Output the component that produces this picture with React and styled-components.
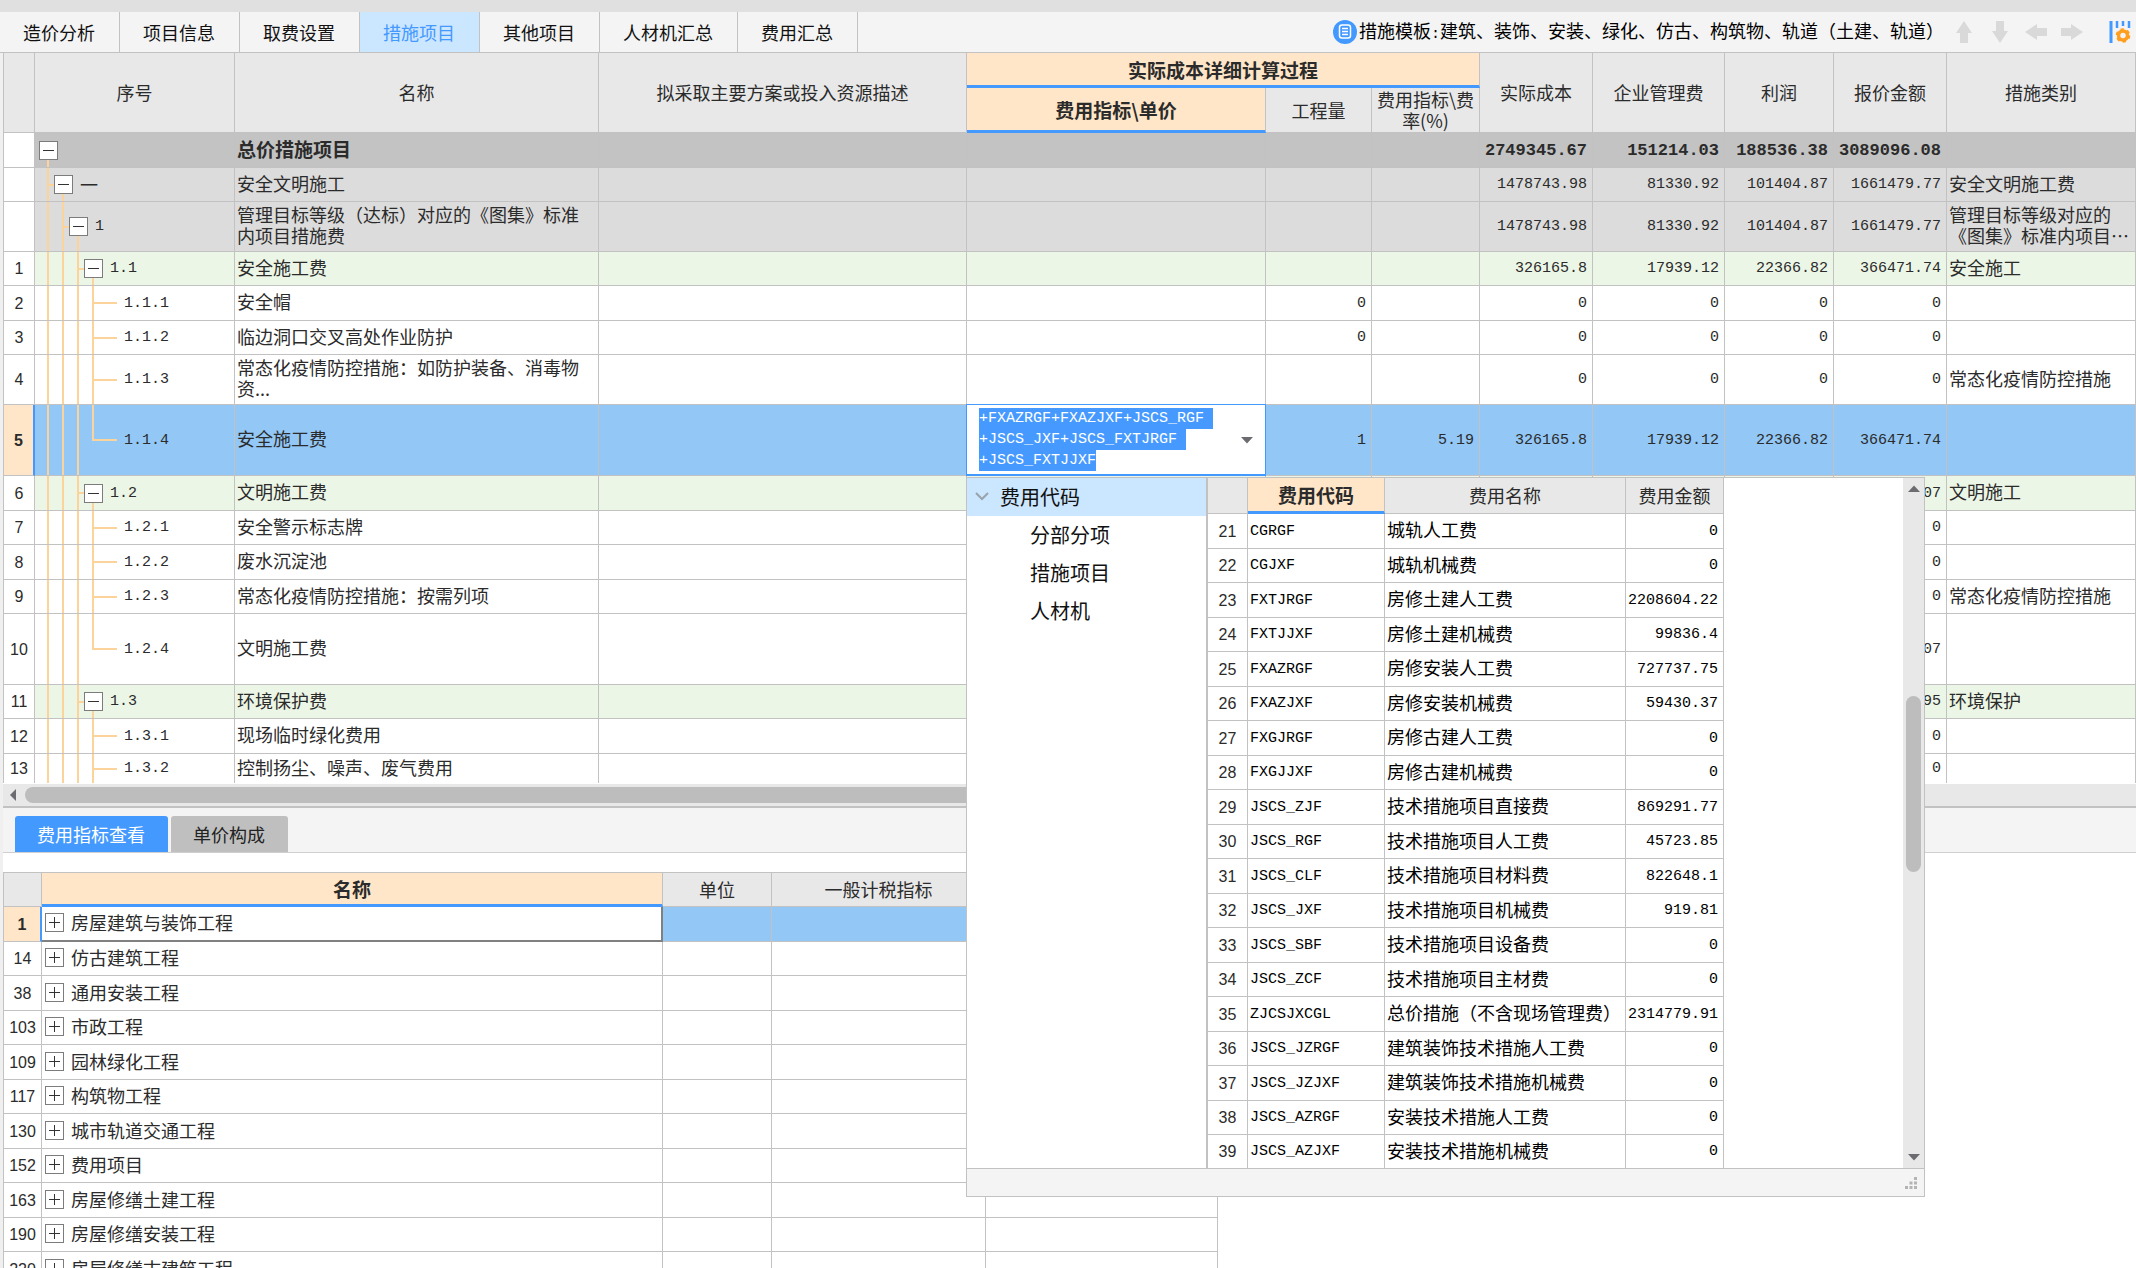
import { useEffect, useRef } from "react";
import styled, { createGlobalStyle, css, ThemeProvider } from "styled-components";

const theme = {
  colors: {
    text: "#2b2b2b",
    line: "#c2c2c2",
    head: "#e8e8e8",
    bar: "#f4f4f4",
    blue: "#4499ff",
    select: "#92c7f6",
    pale: "#cbe6ff",
    orange: "#ffe6c8",
    guide: "#fdd39c",
    total: "#c3c3c3",
    group: "#dcdcdc",
    green: "#ecf6e6",
  },
  fonts: {
    cjk: '"Noto Sans CJK SC", sans-serif',
    mono: '"Liberation Mono", "Noto Sans CJK SC", monospace',
    sans: '"Liberation Sans", sans-serif',
  },
};

const tabs = [
  "造价分析",
  "项目信息",
  "取费设置",
  "措施项目",
  "其他项目",
  "人材机汇总",
  "费用汇总",
];

const zeros = ["0", "0", "0", "0"];

// vals: 工程量, 费率, 实际成本, 企业管理费, 利润, 报价金额
const items = [
  { no: "", level: 0, code: "", name: "总价措施项目", tone: "total", vals: ["", "", "2749345.67", "151214.03", "188536.38", "3089096.08"], kind: "" },
  { no: "", level: 1, code: "一", name: "安全文明施工", tone: "group", vals: ["", "", "1478743.98", "81330.92", "101404.87", "1661479.77"], kind: "安全文明施工费" },
  { no: "", level: 2, code: "1", name: "管理目标等级（达标）对应的《图集》标准\n内项目措施费", tone: "group", size: 50, vals: ["", "", "1478743.98", "81330.92", "101404.87", "1661479.77"], kind: "管理目标等级对应的\n《图集》标准内项目…" },
  { no: 1, level: 3, code: "1.1", name: "安全施工费", tone: "green", vals: ["", "", "326165.8", "17939.12", "22366.82", "366471.74"], kind: "安全施工" },
  { no: 2, leaf: true, code: "1.1.1", name: "安全帽", vals: ["0", "", ...zeros], kind: "" },
  { no: 3, leaf: true, code: "1.1.2", name: "临边洞口交叉高处作业防护", vals: ["0", "", ...zeros], kind: "" },
  { no: 4, leaf: true, code: "1.1.3", name: "常态化疫情防控措施：如防护装备、消毒物\n资...", size: 50, vals: ["", "", ...zeros], kind: "常态化疫情防控措施" },
  { no: 5, leaf: true, last: true, editing: true, code: "1.1.4", name: "安全施工费", tone: "select", size: 71, vals: ["1", "5.19", "326165.8", "17939.12", "22366.82", "366471.74"], kind: "" },
  { no: 6, level: 3, code: "1.2", name: "文明施工费", tone: "green", vals: ["", "", "", "", "", "07"], kind: "文明施工" },
  { no: 7, leaf: true, code: "1.2.1", name: "安全警示标志牌", vals: ["", "", "", "", "", "0"], kind: "" },
  { no: 8, leaf: true, code: "1.2.2", name: "废水沉淀池", vals: ["", "", "", "", "", "0"], kind: "" },
  { no: 9, leaf: true, code: "1.2.3", name: "常态化疫情防控措施：按需列项", vals: ["", "", "", "", "", "0"], kind: "常态化疫情防控措施" },
  { no: 10, leaf: true, last: true, code: "1.2.4", name: "文明施工费", size: 71, vals: ["", "", "", "", "", "07"], kind: "" },
  { no: 11, level: 3, code: "1.3", name: "环境保护费", tone: "green", vals: ["", "", "", "", "", "95"], kind: "环境保护" },
  { no: 12, leaf: true, code: "1.3.1", name: "现场临时绿化费用", vals: ["", "", "", "", "", "0"], kind: "" },
  { no: 13, leaf: true, code: "1.3.2", name: "控制扬尘、噪声、废气费用", size: 29, vals: ["", "", "", "", "", "0"], kind: "" },
];

const feeCodes = [
  ["CGRGF", "城轨人工费", "0"],
  ["CGJXF", "城轨机械费", "0"],
  ["FXTJRGF", "房修土建人工费", "2208604.22"],
  ["FXTJJXF", "房修土建机械费", "99836.4"],
  ["FXAZRGF", "房修安装人工费", "727737.75"],
  ["FXAZJXF", "房修安装机械费", "59430.37"],
  ["FXGJRGF", "房修古建人工费", "0"],
  ["FXGJJXF", "房修古建机械费", "0"],
  ["JSCS_ZJF", "技术措施项目直接费", "869291.77"],
  ["JSCS_RGF", "技术措施项目人工费", "45723.85"],
  ["JSCS_CLF", "技术措施项目材料费", "822648.1"],
  ["JSCS_JXF", "技术措施项目机械费", "919.81"],
  ["JSCS_SBF", "技术措施项目设备费", "0"],
  ["JSCS_ZCF", "技术措施项目主材费", "0"],
  ["ZJCSJXCGL", "总价措施（不含现场管理费）", "2314779.91"],
  ["JSCS_JZRGF", "建筑装饰技术措施人工费", "0"],
  ["JSCS_JZJXF", "建筑装饰技术措施机械费", "0"],
  ["JSCS_AZRGF", "安装技术措施人工费", "0"],
  ["JSCS_AZJXF", "安装技术措施机械费", "0"],
];

const indexes = [
  [1, "房屋建筑与装饰工程"],
  [14, "仿古建筑工程"],
  [38, "通用安装工程"],
  [103, "市政工程"],
  [109, "园林绿化工程"],
  [117, "构筑物工程"],
  [130, "城市轨道交通工程"],
  [152, "费用项目"],
  [163, "房屋修缮土建工程"],
  [190, "房屋修缮安装工程"],
  [220, "房屋修缮古建筑工程"],
];

const formula =
  "+FXAZRGF+FXAZJXF+JSCS_RGF\n+JSCS_JXF+JSCS_FXTJRGF\n+JSCS_FXTJJXF";

function FormulaEditor() {
  const box = useRef(null);

  useEffect(() => {
    box.current.focus();
    box.current.select();
  }, []);

  return (
    <Editor>
      <textarea
        ref={box}
        aria-label="费用指标\单价"
        defaultValue={formula}
        spellCheck={false}
      />
      <button type="button" aria-label="费用代码">
        <Triangle />
      </button>
    </Editor>
  );
}

function Triangle({ turn = 0 }) {
  return (
    <svg width="12" height="8" viewBox="0 0 12 8">
      <path d="M0 1h12L6 7.500z" fill="#6b6b70" transform={`rotate(${turn} 6 4)`} />
    </svg>
  );
}

function CodePopup() {
  return (
    <Popup>
      <div className="popup-body">
        <CodeTree>
          <TreeButton type="button" $active>
            <svg width="16" height="16" viewBox="0 0 16 16">
              <path d="M2 5l6 6 6-6" fill="none" stroke="#9aa3ab" strokeWidth="2" />
            </svg>
            费用代码
          </TreeButton>
          <TreeButton type="button" $child>分部分项</TreeButton>
          <TreeButton type="button" $child>措施项目</TreeButton>
          <TreeButton type="button" $child>人材机</TreeButton>
        </CodeTree>
        <div className="popup-codes">
          <Grid $width={516}>
            <colgroup>
              <col style={{ width: 40 }} />
              <col style={{ width: 137 }} />
              <col style={{ width: 241 }} />
              <col style={{ width: 98 }} />
            </colgroup>
            <thead>
              <tr>
                <Head $height={36} />
                <Head $current>费用代码</Head>
                <Head>费用名称</Head>
                <Head>费用金额</Head>
              </tr>
            </thead>
            <tbody>
              {feeCodes.map(([code, name, amount], i) => (
                <Row key={code} $size={i === feeCodes.length - 1 ? 33 : 0}>
                  <RowNo>{i + 21}</RowNo>
                  <Code>{code}</Code>
                  <Text $dark>{name}</Text>
                  <Num $dark>{amount}</Num>
                </Row>
              ))}
            </tbody>
          </Grid>
        </div>
        <VScroll>
          <Triangle turn={180} />
          <div className="track">
            <div className="thumb" />
          </div>
          <Triangle />
        </VScroll>
      </div>
      <div className="popup-foot">
        <svg width="14" height="14" viewBox="0 0 14 14" fill="#b4b4b4">
          <path d="M10 1h3v3h-3zM5.500 5.500h3v3h-3zM10 5.500h3v3h-3zM1 10h3v3H1zM5.500 10h3v3h-3zM10 10h3v3h-3z" />
        </svg>
      </div>
    </Popup>
  );
}

function TreeCode({ item }) {
  const depth = item.leaf ? 4 : item.level;
  return (
    <Tree>
      {Array.from({ length: depth }, (_, i) => (
        <Guide
          key={i}
          $stub={i === depth - 1}
          $half={item.last && i === depth - 1}
          $long={item.leaf}
        />
      ))}
      {item.leaf ? (
        <span className="leaf-gap" />
      ) : (
        <BranchMark>
          <Toggle type="button" aria-label="收起">
            <svg width="11" height="11" viewBox="0 0 11 11">
              <path d="M0 5.500h11" stroke="#333" />
            </svg>
          </Toggle>
        </BranchMark>
      )}
      <span className={item.code === "一" ? "han" : ""}>{item.code}</span>
    </Tree>
  );
}

function Arrow({ turn, label }) {
  return (
    <IconButton type="button" aria-label={label}>
      <svg width="24" height="24" viewBox="0 0 24 24">
        <path d="M12 1l8 12h-4v10H8V13H4z" fill="#d9d9d9" transform={`rotate(${turn} 12 12)`} />
      </svg>
    </IconButton>
  );
}

function TopBar() {
  return (
    <Bar>
      <nav>
        {tabs.map((tab) => (
          <Tab key={tab} type="button" $active={tab === "措施项目"}>
            {tab}
          </Tab>
        ))}
      </nav>
      <div className="tools">
        <svg width="24" height="24" viewBox="0 0 24 24">
          <circle cx="12" cy="12" r="12" fill="#4499ff" />
          <rect x="6.500" y="5" width="11" height="13" rx="2.500" fill="none" stroke="#fff" strokeWidth="1.500" />
          <path d="M9 8.500h6M9 11.500h6M9 14.500h6" stroke="#fff" strokeWidth="1.500" />
        </svg>
        <span className="template">
          措施模板<span className="colon">:</span>
          建筑、装饰、安装、绿化、仿古、构筑物、轨道（土建、轨道）
        </span>
        <div className="arrows">
          <Arrow turn={0} label="上移" />
          <Arrow turn={180} label="下移" />
          <Arrow turn={270} label="左移" />
          <Arrow turn={90} label="右移" />
        </div>
        <IconButton type="button" aria-label="设置">
          <svg width="24" height="24" viewBox="0 0 24 24">
            <path d="M3 1v22" stroke="#4499ff" strokeWidth="3" />
            <path d="M9 1v7M15 1v5M21 1v7" stroke="#4499ff" strokeWidth="2.500" />
            <circle cx="15" cy="15.500" r="4.500" fill="none" stroke="#ff9e1f" strokeWidth="3.500" />
            <circle cx="15" cy="15.500" r="6.200" fill="none" stroke="#ff9e1f" strokeWidth="2.200" strokeDasharray="3.250 3.250" />
          </svg>
        </IconButton>
      </div>
    </Bar>
  );
}

function MeasureGrid() {
  return (
    <Grid>
      <colgroup>
        {[32, 200, 364, 368, 299, 106, 108, 113, 132, 109, 113].map((w, i) => (
          <col key={i} style={{ width: w }} />
        ))}
        <col />
      </colgroup>
      <thead>
        <tr>
          <Head rowSpan={2} $first />
          <Head rowSpan={2}>序号</Head>
          <Head rowSpan={2}>名称</Head>
          <Head rowSpan={2}>拟采取主要方案或投入资源描述</Head>
          <Head colSpan={3} $current $height={35}>实际成本详细计算过程</Head>
          <Head rowSpan={2}>实际成本</Head>
          <Head rowSpan={2}>企业管理费</Head>
          <Head rowSpan={2}>利润</Head>
          <Head rowSpan={2}>报价金额</Head>
          <Head rowSpan={2}>措施类别</Head>
        </tr>
        <tr>
          <Head $current $height={45}>费用指标\单价</Head>
          <Head>工程量</Head>
          <Head>{"费用指标\\费\n率(%)"}</Head>
        </tr>
      </thead>
      <tbody>
        {items.map((item) => (
          <Row key={item.code} $tone={item.tone} $size={item.size}>
            <RowNo $first $current={item.editing}>{item.no}</RowNo>
            <td>
              <TreeCode item={item} />
            </td>
            <Text $bold={item.tone === "total"}>{item.name}</Text>
            <td />
            {item.editing ? (
              <EditCell>
                <FormulaEditor />
                <CodePopup />
              </EditCell>
            ) : (
              <td />
            )}
            {item.vals.map((val, i) => (
              <Num key={i} $bold={item.tone === "total"}>{val}</Num>
            ))}
            <Text>{item.kind}</Text>
          </Row>
        ))}
      </tbody>
    </Grid>
  );
}

function IndexGrid() {
  return (
    <Grid $width={1215} $top>
      <colgroup>
        <col style={{ width: 39 }} />
        <col style={{ width: 621 }} />
        <col style={{ width: 109 }} />
        <col style={{ width: 214 }} />
        <col style={{ width: 232 }} />
      </colgroup>
      <thead>
        <tr>
          <Head $first $height={34} />
          <Head $current>名称</Head>
          <Head>单位</Head>
          <Head>一般计税指标</Head>
          <Head />
        </tr>
      </thead>
      <tbody>
        {indexes.map(([no, name], i) => (
          <Row key={no} $tone={i === 0 ? "select" : ""}>
            <RowNo $first $current={i === 0}>{no}</RowNo>
            <IndexName $current={i === 0}>
              <div>
                <Toggle type="button" aria-label="展开">
                  <svg width="11" height="11" viewBox="0 0 11 11">
                    <path d="M0 5.500h11M5.500 0v11" stroke="#333" />
                  </svg>
                </Toggle>
                {name}
              </div>
            </IndexName>
            <td />
            <td />
            <td />
          </Row>
        ))}
      </tbody>
    </Grid>
  );
}

function App() {
  return (
    <ThemeProvider theme={theme}>
      <GlobalStyle />
      <Page>
        <TopBar />
        <main>
          <MeasureGrid />
          <HScroll>
            <svg width="8" height="12" viewBox="0 0 8 12">
              <path d="M7 0v12L1 6z" fill="#6b6b70" />
            </svg>
            <div className="thumb" />
          </HScroll>
          <LowerTabs>
            <LowerTab type="button" $active>费用指标查看</LowerTab>
            <LowerTab type="button">单价构成</LowerTab>
          </LowerTabs>
          <Lower>
            <IndexGrid />
          </Lower>
        </main>
      </Page>
    </ThemeProvider>
  );
}

export default App;

const GlobalStyle = createGlobalStyle`
  * {
    box-sizing: border-box;
  }

  body {
    margin: 0;
    overflow: hidden;
    background: #f0f0f0;
  }

  button {
    border: 0;
    padding: 0;
    background: none;
    color: inherit;
    font: inherit;
  }

  svg {
    display: block;
    flex: none;
  }
`;

const Page = styled.div`
  display: flex;
  flex-direction: column;
  height: 100vh;
  overflow: hidden;
  border-top: 12px solid #e0e0e0;
  font-family: ${({ theme }) => theme.fonts.cjk};
  font-size: 18px;
  line-height: 21px;
  color: ${({ theme }) => theme.colors.text};

  main {
    flex: 1;
    display: flex;
    flex-direction: column;
    min-height: 0;
    padding-left: 3px;
  }
`;

const Bar = styled.header`
  display: flex;
  justify-content: space-between;
  height: 41px;
  background: ${({ theme }) => theme.colors.bar};
  border-bottom: 1px solid ${({ theme }) => theme.colors.line};

  nav,
  .tools,
  .arrows {
    display: flex;
  }

  .tools {
    align-items: center;
    padding-right: 4px;
    color: #000;
  }

  .template {
    margin: 0 8px 0 2px;
  }

  .colon {
    font-family: ${({ theme }) => theme.fonts.mono};
    font-size: 15px;
  }

  .arrows {
    gap: 12px;
    margin-right: 24px;
  }
`;

const Tab = styled.button`
  padding: 0 24px 0 23px;
  border-right: 1px solid ${({ theme }) => theme.colors.line};
  color: #111;

  ${({ $active, theme }) =>
    $active &&
    css`
      background: ${theme.colors.pale};
      color: ${theme.colors.blue};
    `}
`;

const IconButton = styled.button`
  width: 24px;
  height: 24px;
`;

const Grid = styled.table`
  flex: none;
  table-layout: fixed;
  width: ${({ $width }) => ($width ? `${$width}px` : "100%")};
  border-spacing: 0;
  border-top: ${({ $top, theme }) => ($top ? `1px solid ${theme.colors.line}` : 0)};
  background: #fff;

  td,
  th {
    padding: 0;
    border-right: 1px solid ${({ theme }) => theme.colors.line};
    border-bottom: 1px solid ${({ theme }) => theme.colors.line};
  }
`;

const Head = styled.th`
  && {
    height: ${({ $height }) => ($height ? `${$height}px` : "auto")};
    background: ${({ theme }) => theme.colors.head};
    border-left: ${({ $first, theme }) => ($first ? `1px solid ${theme.colors.line}` : 0)};
    font-weight: 400;
    text-align: center;
    white-space: pre-line;

    ${({ $current, theme }) =>
      $current &&
      css`
        background: ${theme.colors.orange};
        border-bottom: 3px solid ${theme.colors.blue};
        font-size: 19px;
        font-weight: 700;
      `}
  }
`;

const Row = styled.tr`
  height: ${({ $size }) => $size || 35}px;
  background: ${({ $tone, theme }) => theme.colors[$tone] || "#fff"};

  &:nth-child(even) {
    height: ${({ $size }) => $size || 34}px;
  }

  && > td {
    height: inherit;
  }

  &:last-child > td {
    border-bottom: 0;
  }
`;

const RowNo = styled.td`
  background: #fff;
  border-left: ${({ $first, theme }) => ($first ? `1px solid ${theme.colors.line}` : 0)};
  font-family: ${({ theme }) => theme.fonts.sans};
  font-size: 16px;
  text-align: center;

  ${({ $current, theme }) =>
    $current &&
    css`
      background: ${theme.colors.orange};
      font-weight: 700;

      ${Grid} && {
        border-right: 2px solid ${theme.colors.blue};
      }
    `}
`;

const Text = styled.td`
  ${Grid} && {
    padding: 0 0 3px 2px;
  }
  color: ${({ $dark }) => ($dark ? "#000" : "inherit")};
  font-size: ${({ $bold }) => ($bold ? 19 : 18)}px;
  font-weight: ${({ $bold }) => ($bold ? 700 : 400)};
  white-space: pre;
  overflow: hidden;
`;

const Num = styled.td`
  ${Grid} && {
    padding-right: 5px;
  }
  color: ${({ $dark }) => ($dark ? "#000" : "inherit")};
  font-family: ${({ theme }) => theme.fonts.mono};
  font-size: ${({ $bold }) => ($bold ? 17 : 15)}px;
  font-weight: ${({ $bold }) => ($bold ? 700 : 400)};
  text-align: right;
`;

const Code = styled.td`
  ${Grid} && {
    padding-left: 2px;
  }
  color: #000;
  font-family: ${({ theme }) => theme.fonts.mono};
  font-size: 15px;
`;

const Tree = styled.div`
  display: flex;
  align-items: center;
  height: 100%;
  padding-left: 12px;
  font-family: ${({ theme }) => theme.fonts.mono};
  font-size: 15px;

  .leaf-gap {
    width: 17px;
  }

  .han {
    font-family: ${({ theme }) => theme.fonts.cjk};
    font-size: 18px;
  }
`;

const Guide = styled.span`
  flex: none;
  width: 15px;
  height: 100%;
  background-image: linear-gradient(${({ theme }) => theme.colors.guide} 0 100%),
    linear-gradient(${({ theme }) => theme.colors.guide} 0 100%);
  background-repeat: no-repeat;
  background-position: 0 0, 0 50%;
  background-size: 2px ${({ $half }) => ($half ? "50%" : "100%")},
    ${({ $stub }) => ($stub ? "100% 2px" : "0 0")};

  ${({ $stub, $long }) =>
    $stub &&
    $long &&
    css`
      width: 25px;
      margin-right: -10px;
    `}
`;

const BranchMark = styled.span`
  display: flex;
  align-items: center;
  height: 100%;
  margin: 0 7px 0 -8px;
  background: linear-gradient(${({ theme }) => theme.colors.guide} 0 100%) no-repeat
    8px 100% / 2px 50%;
`;

const Toggle = styled.button`
  display: flex;
  align-items: center;
  justify-content: center;
  flex: none;
  width: 19px;
  height: 19px;
  border: 1px solid #7c7c7c;
  background: #fff;
`;

const EditCell = styled.td`
  position: relative;
`;

const Editor = styled.div`
  position: absolute;
  inset: -1px;
  display: flex;
  align-items: center;
  padding: 3px 12px;
  border: 1px solid ${({ theme }) => theme.colors.blue};
  border-bottom-width: 2px;
  background: #fff;

  textarea {
    flex: 1;
    height: 63px;
    min-width: 0;
    padding: 0;
    border: 0;
    outline: 0;
    resize: none;
    overflow: hidden;
    background: none;
    font-family: ${({ theme }) => theme.fonts.mono};
    font-size: 15px;
    line-height: 21px;
  }

  textarea::selection {
    background: rgba(68, 153, 255, 0.99);
    color: #fff;
  }
`;

const Popup = styled.div`
  position: absolute;
  z-index: 5;
  top: 72px;
  left: -1px;
  width: 959px;
  border: 1px solid ${({ theme }) => theme.colors.line};
  background: #fff;

  .popup-body {
    display: flex;
  }

  .popup-codes {
    flex: 1;
    border-left: 2px solid ${({ theme }) => theme.colors.line};
  }

  .popup-foot {
    display: flex;
    justify-content: flex-end;
    height: 28px;
    padding: 7px 6px;
    border-top: 1px solid ${({ theme }) => theme.colors.line};
    background: ${({ theme }) => theme.colors.bar};
  }
`;

const CodeTree = styled.div`
  width: 239px;
`;

const TreeButton = styled.button`
  display: flex;
  align-items: center;
  gap: 10px;
  width: 100%;
  height: 38px;
  padding: 0 0 2px ${({ $child }) => ($child ? 63 : 7)}px;
  background: ${({ $active, theme }) => ($active ? theme.colors.pale : "#fff")};
  color: #111;
  font-size: 20px;
`;

const VScroll = styled.div`
  display: flex;
  flex-direction: column;
  align-items: center;
  width: 21px;
  padding: 7px 0;
  background: ${({ theme }) => theme.colors.head};

  .track {
    flex: 1;
    padding-top: 203px;
  }

  .thumb {
    width: 15px;
    height: 176px;
    border-radius: 8px;
    background: #bdbdbd;
  }
`;

const HScroll = styled.div`
  display: flex;
  align-items: center;
  flex: none;
  gap: 8px;
  height: 25px;
  padding-left: 6px;
  border-top: 1px solid #fff;
  border-bottom: 2px solid ${({ theme }) => theme.colors.line};
  background: ${({ theme }) => theme.colors.head};

  .thumb {
    width: 80%;
    height: 16px;
    border-radius: 8px;
    background: #bdbdbd;
  }
`;

const LowerTabs = styled.div`
  display: flex;
  flex: none;
  align-items: flex-end;
  gap: 3px;
  height: 45px;
  padding-left: 12px;
  border-bottom: 1px solid #cfcfcf;
  background: ${({ theme }) => theme.colors.bar};
`;

const LowerTab = styled.button`
  height: 36px;
  padding: 0 23px 0 22px;
  border-radius: 3px 3px 0 0;
  background: ${({ $active, theme }) => ($active ? theme.colors.blue : "#bfbfbf")};
  color: ${({ $active }) => ($active ? "#fff" : "#222")};
`;

const Lower = styled.section`
  flex: 1;
  min-height: 0;
  overflow: hidden;
  padding-top: 19px;
  background: #fff;
`;

const IndexName = styled.td`
  div {
    display: flex;
    align-items: center;
    gap: 7px;
    padding: 0 0 2px 3px;
  }

  ${({ $current }) =>
    $current &&
    css`
      background: #fff;

      ${Grid} && {
        border-right: 2px solid #808080;
        border-bottom: 2px solid #808080;
      }
    `}
`;
